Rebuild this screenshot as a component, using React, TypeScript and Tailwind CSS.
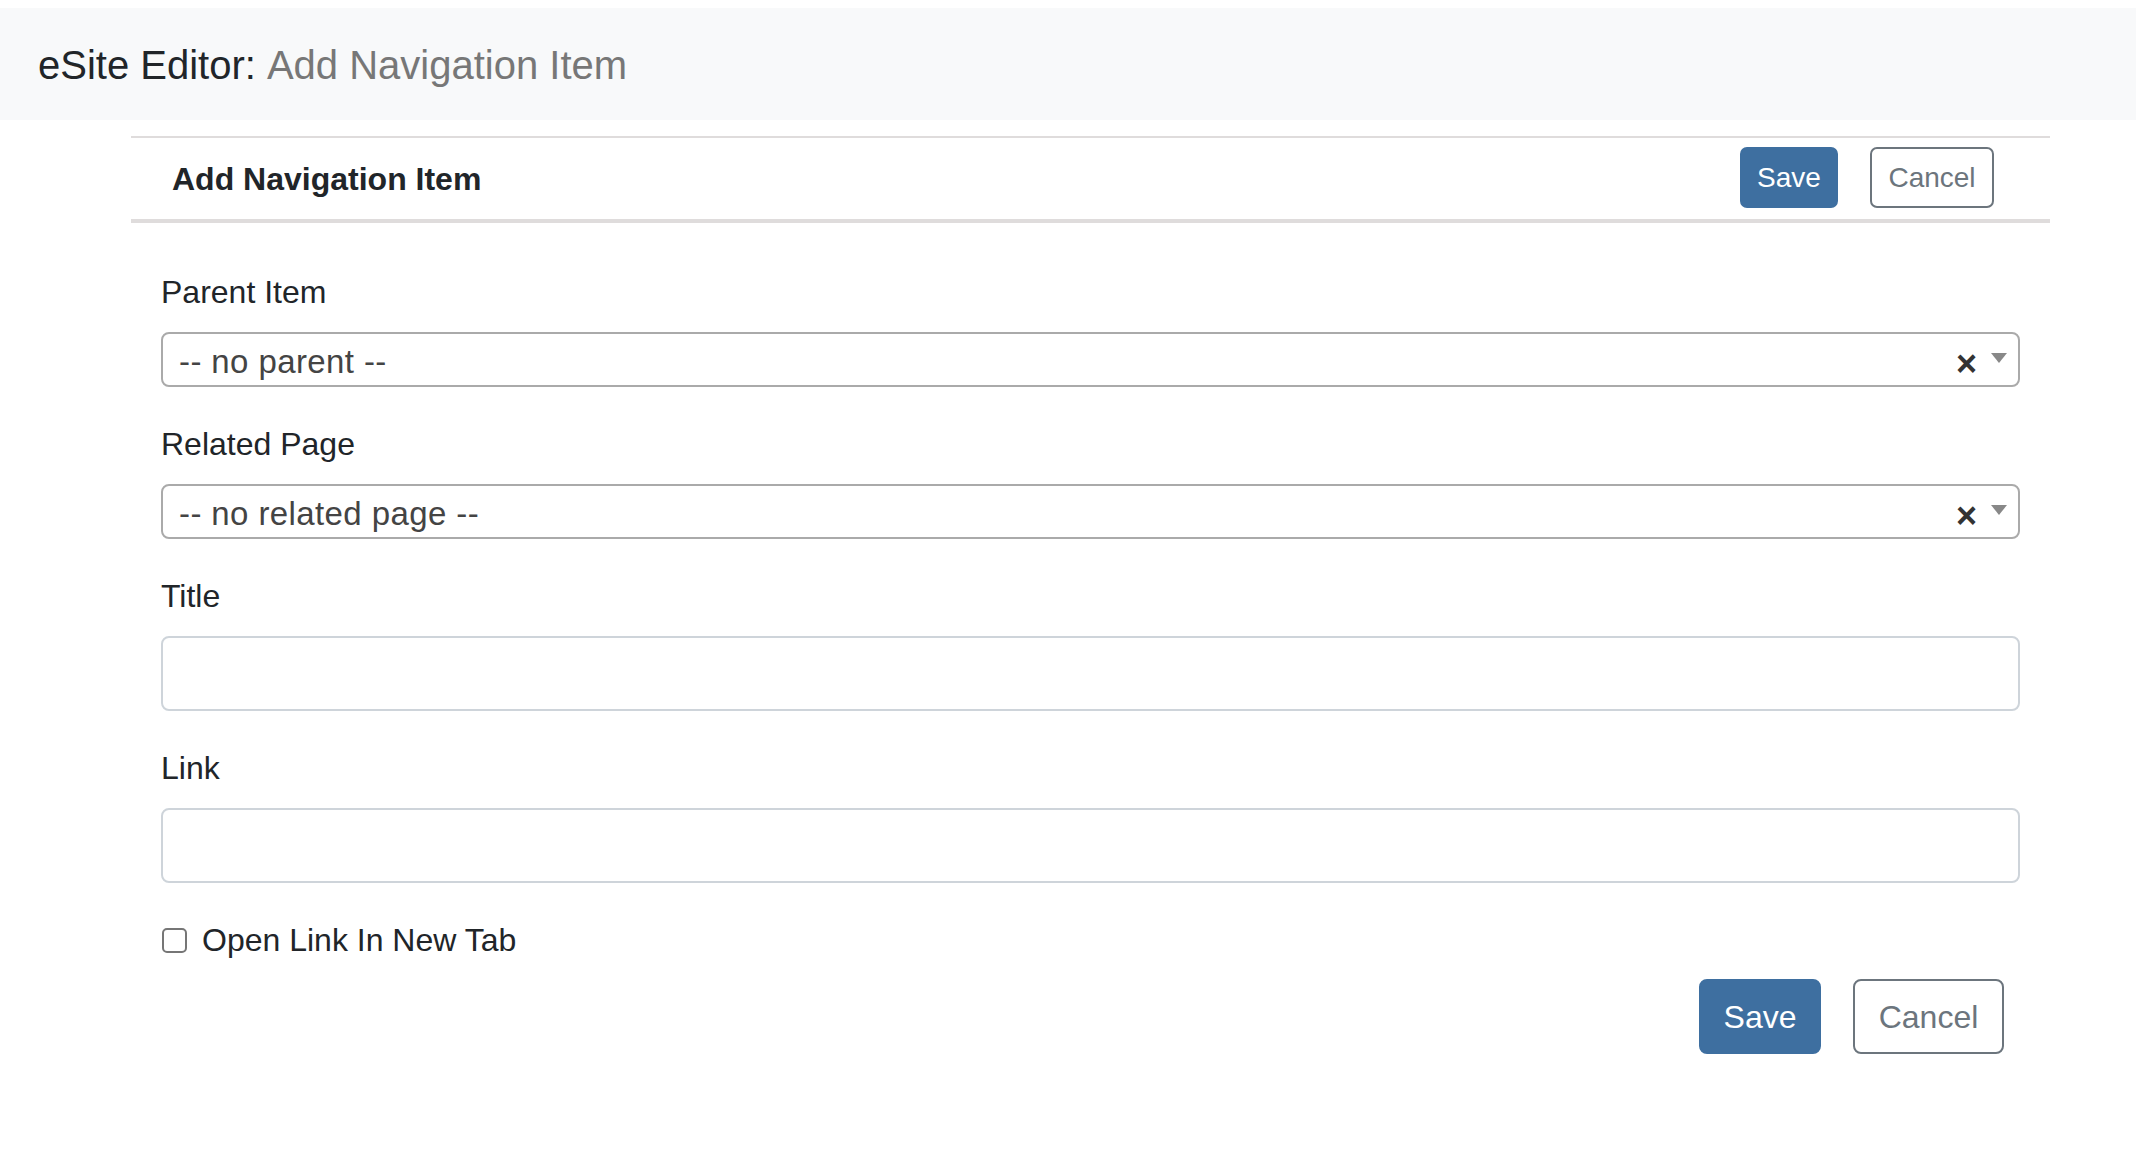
import { useState } from 'react';

// --- SELECT COM LIMPAR (estilo select2) ---
function ClearSelect({ value }: { value: string }) {
    return (
        <div className="flex h-[55px] items-center rounded-[8px] border-2 border-[#aaaaaa] bg-white pl-[16px] pr-[11px]">
            <span className="mt-[3px] flex-1 text-[33px] leading-none tracking-[0.4px] text-[#444444]">{value}</span>
            <span className="mt-[8px] text-[36px] font-bold leading-none text-[#333333]">×</span>
            <span className="ml-[14px] mb-[4px] h-0 w-0 border-x-[8px] border-t-[10px] border-x-transparent border-t-[#888888]" />
        </div>
    );
}

function Field({ label, children }: { label: string; children: React.ReactNode }) {
    return (
        <div className="flex flex-col">
            <label className="mb-[16px] text-[32px] leading-[48px] text-[#212529]">{label}</label>
            {children}
        </div>
    );
}

export default function App() {
    const [title, setTitle] = useState('');
    const [link, setLink] = useState('');
    const [newTab, setNewTab] = useState(false);

    return (
        <div className="min-h-screen bg-white pt-[8px] font-['Liberation_Sans',Arial,sans-serif] text-[#212529]">
            {/* CABEÇALHO */}
            <div className="flex h-[112px] items-center bg-[#f8f9fa] pl-[38px] pt-[2px] text-[40px] leading-none">
                <span className="text-[#212529]">eSite Editor:</span>
                <span className="ml-[11px] text-[#777777]">Add Navigation Item</span>
            </div>

            <div className="ml-[131px] mr-[86px] mt-[16px]">
                {/* BARRA DO CARTÃO */}
                <div className="flex h-[87px] items-center justify-between border-t-2 border-b-4 border-[#dfdcdc] pl-[41px] pr-[56px]">
                    <h2 className="text-[32px] font-bold leading-none text-[#212529]">Add Navigation Item</h2>
                    <div className="mb-[2px] flex gap-[32px]">
                        <button className="h-[61px] w-[98px] rounded-[7px] border-2 border-[#3e6fa0] bg-[#3e6fa0] text-[28px] text-white">
                            Save
                        </button>
                        <button className="h-[61px] w-[124px] rounded-[7px] border-2 border-[#6c757d] bg-white text-[28px] text-[#6c757d]">
                            Cancel
                        </button>
                    </div>
                </div>

                {/* FORMULÁRIO */}
                <form className="flex flex-col gap-[33px] px-[30px] pt-[45px]" onSubmit={(e) => e.preventDefault()}>
                    <Field label="Parent Item">
                        <ClearSelect value="-- no parent --" />
                    </Field>
                    <Field label="Related Page">
                        <ClearSelect value="-- no related page --" />
                    </Field>
                    <Field label="Title">
                        <input
                            value={title}
                            onChange={(e) => setTitle(e.target.value)}
                            className="h-[75px] rounded-[8px] border-2 border-[#ced4da] px-[24px] text-[32px] outline-none"
                        />
                    </Field>
                    <Field label="Link">
                        <input
                            value={link}
                            onChange={(e) => setLink(e.target.value)}
                            className="h-[75px] rounded-[8px] border-2 border-[#ced4da] px-[24px] text-[32px] outline-none"
                        />
                    </Field>

                    <div className="flex flex-col gap-[15px]">
                        <label className="flex h-[48px] items-center text-[32px] text-[#212529]">
                            <input
                                type="checkbox"
                                checked={newTab}
                                onChange={(e) => setNewTab(e.target.checked)}
                                className="ml-[1px] h-[25px] w-[25px] appearance-none rounded-[5px] border-2 border-[#767676] bg-white checked:bg-[#3e6fa0]"
                            />
                            <span className="ml-[15px]">Open Link In New Tab</span>
                        </label>

                        <div className="flex justify-end gap-[32px] pr-[16px]">
                            <button className="h-[75px] w-[122px] rounded-[8px] border-2 border-[#3e6fa0] bg-[#3e6fa0] text-[32px] text-white">
                                Save
                            </button>
                            <button className="h-[75px] w-[151px] rounded-[8px] border-2 border-[#6c757d] bg-white text-[32px] text-[#6c757d]">
                                Cancel
                            </button>
                        </div>
                    </div>
                </form>
            </div>
        </div>
    );
}
